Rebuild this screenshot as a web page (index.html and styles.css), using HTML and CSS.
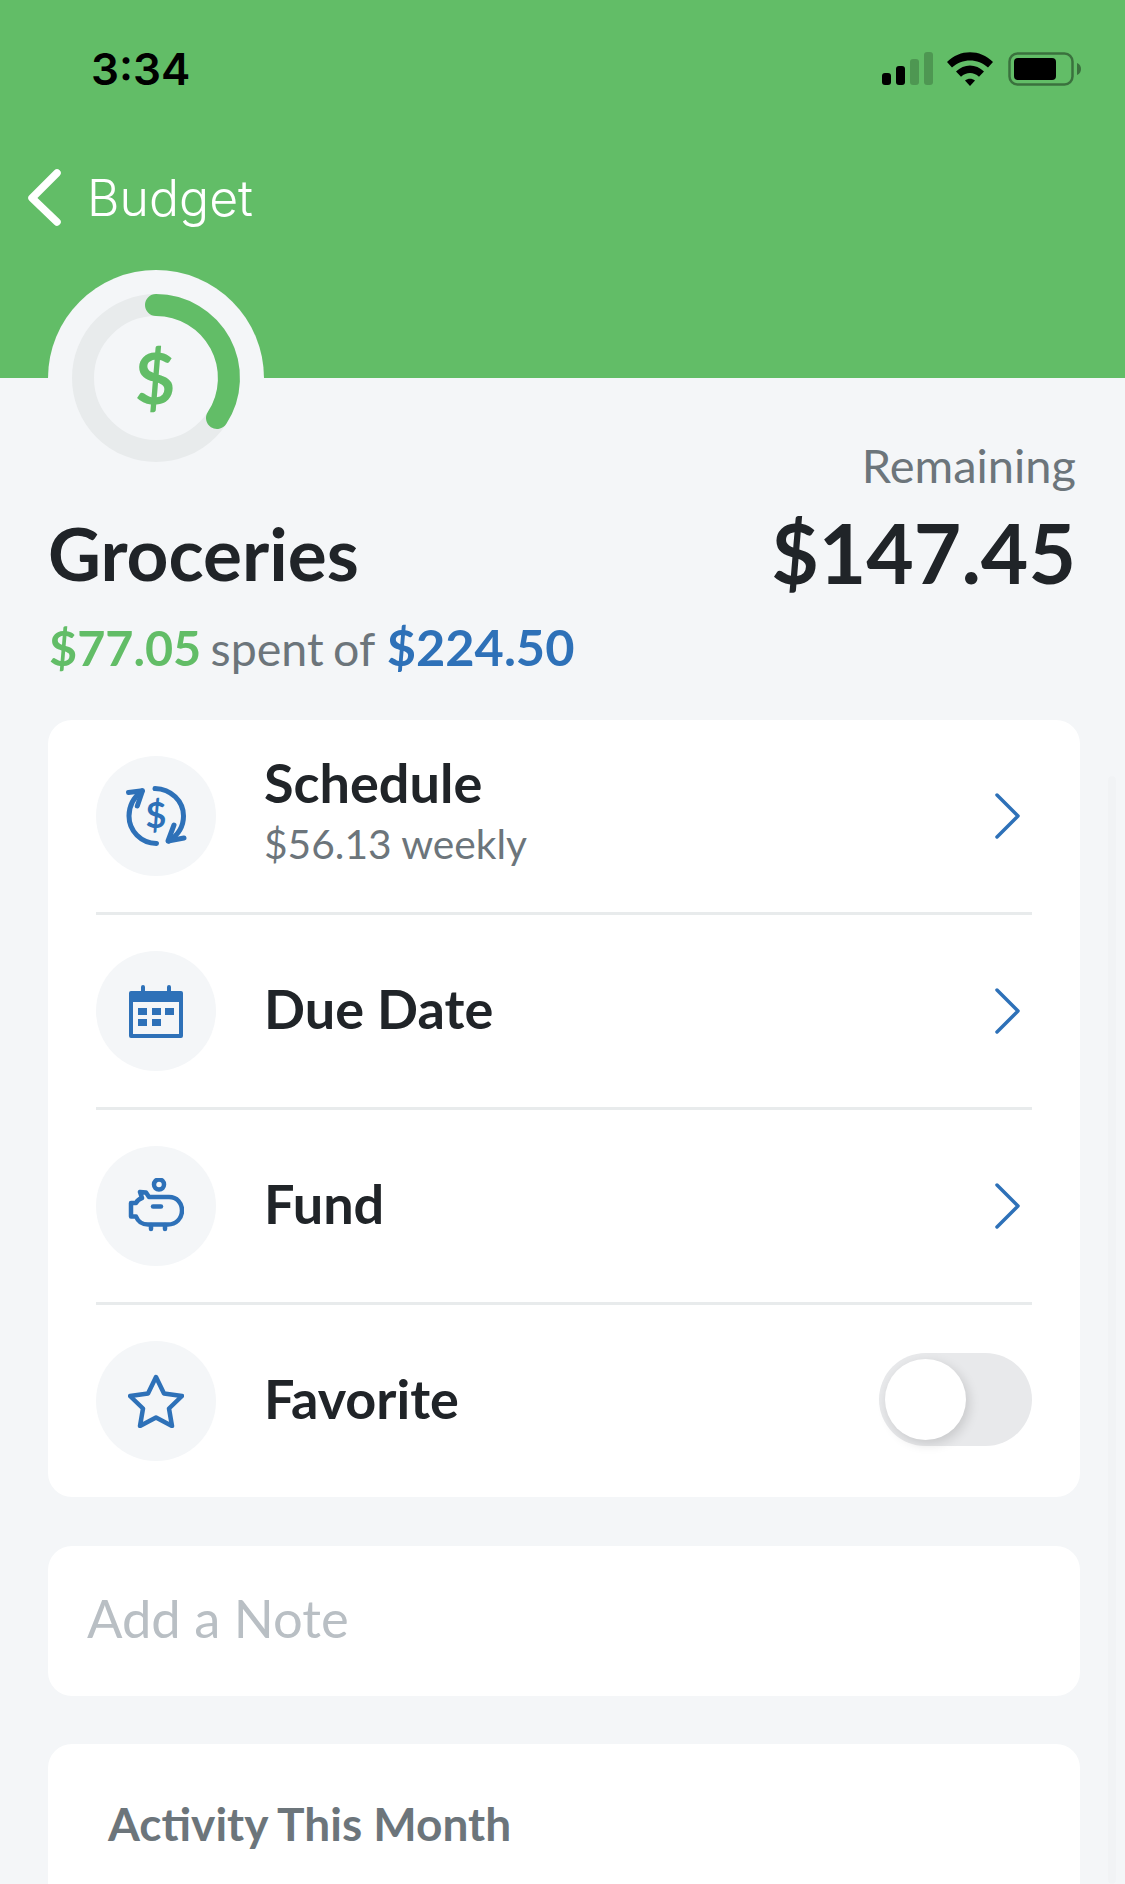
FILE: index.html
```html
<!DOCTYPE html>
<html lang="en">
<head>
<meta charset="utf-8">
<title>Groceries</title>
<link rel="stylesheet" href="styles.css">
</head>
<body>
<div class="screen">
  <header class="header">
    <div class="status">
      <span class="time">3:34</span>
      <div class="status-icons">
        <svg class="signal" width="52" height="34" viewBox="0 0 52 34"><rect x="0" y="21" width="9" height="12" rx="3" fill="#000"/><rect x="14" y="14" width="9" height="19" rx="3" fill="#000"/><rect x="28" y="7" width="9" height="26" rx="3" fill="#000" opacity=".2"/><rect x="42" y="0" width="9" height="33" rx="3" fill="#000" opacity=".2"/></svg>
        <svg class="wifi" width="46" height="34" viewBox="0 0 46 34"><path d="M0 10C13-3 33-3 46 10l-5 5.500C31 6 15 6 5 15.500z" fill="#000"/><path d="M9 19.500c8-8 20-8 28 0l-5 5.300c-5.500-5-12.500-5-18 0z" fill="#000"/><path d="M18 28.500c3-2.500 7-2.500 10 0l-5 5.500z" fill="#000"/></svg>
        <svg class="battery" width="73" height="34" viewBox="0 0 73 34"><rect x="1.500" y="1.500" width="63" height="31" rx="8" fill="none" stroke="#000" stroke-width="2.500" opacity=".4"/><rect x="6" y="6" width="42" height="22" rx="4" fill="#000"/><path d="M69 11c3 1 4 3.500 4 6s-1 5-4 6z" fill="#000" opacity=".4"/></svg>
      </div>
    </div>
    <nav class="nav">
      <svg class="back" width="36" height="60" viewBox="0 0 36 60"><path d="M30 5 5 30l25 24" fill="none" stroke="#fff" stroke-width="7.500" stroke-linecap="round" stroke-linejoin="round"/></svg>
      <span class="nav-title">Budget</span>
    </nav>
    <div class="ring-badge">
      <svg class="ring" width="216" height="216" viewBox="0 0 216 216">
        <circle cx="108" cy="108" r="108" fill="#f4f6f8"/>
        <circle cx="108" cy="108" r="73" fill="none" stroke="#e8ebec" stroke-width="22"/>
        <path d="M108 35A73 73 0 0 1 169 148" fill="none" stroke="#62bd67" stroke-width="22" stroke-linecap="round"/>
      </svg>
      <span class="ring-dollar">$</span>
    </div>
  </header>

  <section class="summary">
    <div class="summary-left">
      <h1 class="category">Groceries</h1>
      <p class="spent"><b class="green">$77.05</b> spent of <b class="blue">$224.50</b></p>
    </div>
    <div class="summary-right">
      <span class="remaining-label">Remaining</span>
      <span class="remaining-value">$147.45</span>
    </div>
  </section>

  <section class="card">
    <div class="row">
      <span class="icon-circle">
        <svg width="62" height="62" viewBox="0 0 62 62"><g fill="none" stroke="#2e71b8" stroke-width="5" stroke-linecap="round" stroke-linejoin="round"><path d="M31.500 58.500C16 58 4 46 4 31 4 21 9 12 17 6"/><path d="M3.500 7.500 17.500 5.700 12.300 21"/><path d="M30 3.500C46 4 58.500 16 58.500 31 58.500 41 53 50 44 56"/><path d="M59 53 43 56 49 40"/></g><text x="31" y="43" class="icon-dollar">$</text></svg>
      </span>
      <span class="row-text row-text-double"><span class="row-title">Schedule</span><span class="row-sub">$56.13 weekly</span></span>
      <svg class="chev" width="28" height="48" viewBox="0 0 28 48"><path d="M3 3l21 21L3 45" fill="none" stroke="#2e71b8" stroke-width="3.500" stroke-linecap="round" stroke-linejoin="round"/></svg>
    </div>
    <div class="row">
      <span class="icon-circle">
        <svg width="56" height="54" viewBox="0 0 56 54"><path d="M3 7h10V3a2 2 0 0 1 4 0v4h22V3a2 2 0 0 1 4 0v4h10a2 2 0 0 1 2 2v43a2 2 0 0 1-2 2H3a2 2 0 0 1-2-2V9a2 2 0 0 1 2-2zm2 11v32h46V18z" fill="#2e71b8"/><path d="M10 24h9v7h-9zM24 24h9v7h-9zM37 24h9v7h-9zM10 35h9v7h-9zM24 35h9v7h-9z" fill="#2e71b8"/></svg>
      </span>
      <span class="row-text"><span class="row-title">Due Date</span></span>
      <svg class="chev" width="28" height="48" viewBox="0 0 28 48"><path d="M3 3l21 21L3 45" fill="none" stroke="#2e71b8" stroke-width="3.500" stroke-linecap="round" stroke-linejoin="round"/></svg>
    </div>
    <div class="row">
      <span class="icon-circle">
        <svg width="56" height="56" viewBox="0 0 56 56"><g fill="none" stroke="#2e71b8" stroke-width="4.500" stroke-linecap="round" stroke-linejoin="round"><circle cx="31" cy="6.500" r="5"/><path d="M12 14l6 .5 3 4.500h20c8 0 13 6 13 13.500 0 8-6 14-14 14H20c-6 0-10-3-12-8H3V25h5c1-2 3-4 6-5z"/><path d="M25 28.500h8"/><path d="M23 47v4M37 47v4"/></g></svg>
      </span>
      <span class="row-text"><span class="row-title">Fund</span></span>
      <svg class="chev" width="28" height="48" viewBox="0 0 28 48"><path d="M3 3l21 21L3 45" fill="none" stroke="#2e71b8" stroke-width="3.500" stroke-linecap="round" stroke-linejoin="round"/></svg>
    </div>
    <div class="row">
      <span class="icon-circle">
        <svg width="56" height="54" viewBox="0 0 56 54"><path d="M28 3l8 16.500 18 2.500-13 12.500 3 17.500-16-8.500-16 8.500 3-17.500L2 22l18-2.500z" fill="none" stroke="#2e71b8" stroke-width="4.500" stroke-linejoin="round"/></svg>
      </span>
      <span class="row-text"><span class="row-title">Favorite</span></span>
      <span class="toggle"><span class="knob"></span></span>
    </div>
  </section>

  <section class="card note">Add a Note</section>

  <section class="card activity">
    <h2 class="activity-title">Activity This Month</h2>
  </section>

  <div class="scrollbar"></div>
</div>
</body>
</html>
```
FILE: styles.css
```css
* { box-sizing: border-box; }
html, body { margin: 0; padding: 0; }
body {
  width: 1125px;
  height: 1884px;
  overflow: hidden;
  background: #f4f6f8;
  font-family: Lato, "Noto Sans", sans-serif;
  color: #202428;
}
.screen { position: relative; height: 1884px; overflow: hidden; }

.header {
  position: relative;
  height: 378px;
  background: #62bd67;
}
.status {
  height: 130px;
  display: flex;
  justify-content: space-between;
  align-items: flex-start;
  padding: 44px 44px 0 91px;
}
.time {
  font-family: Inter, sans-serif;
  font-weight: 600;
  font-size: 44px;
  line-height: 50px;
  color: #000;
}
.status-icons { display: flex; align-items: center; gap: 13px; padding-top: 8px; }
.battery { margin-left: 2px; }
.nav {
  display: flex;
  align-items: center;
  gap: 24px;
  padding: 38px 0 0 27px;
}
.nav-title {
  font-family: Inter, sans-serif;
  font-weight: 300;
  font-size: 50px;
  line-height: 60px;
  color: #fff;
}
.ring-badge {
  position: absolute;
  left: 48px;
  top: 270px;
  width: 216px;
  height: 216px;
}
.ring { display: block; }
.ring-dollar {
  position: absolute;
  inset: 0;
  display: flex;
  align-items: center;
  justify-content: center;
  padding: 0 2px 3px 0;
  font-size: 70px;
  font-weight: 700;
  color: #62bd67;
}

.summary {
  height: 342px;
  display: flex;
  justify-content: space-between;
  align-items: flex-start;
  padding: 0 49px 0 48px;
}
.summary-left { padding-top: 132px; }
.category {
  margin: 0;
  font-size: 73px;
  line-height: 86px;
  font-weight: 700;
}
.spent {
  margin: 22px 0 0;
  padding-left: 1px;
  font-size: 46.500px;
  line-height: 58px;
  word-spacing: -2.500px;
  color: #6c757b;
}
.green { color: #62bd67; font-weight: 700; font-size: 48.500px; }
.blue { color: #2e71b8; font-weight: 700; font-size: 50.500px; margin-left: 3px; }
.summary-right {
  display: flex;
  flex-direction: column;
  align-items: flex-end;
  padding-top: 59px;
}
.remaining-label {
  font-size: 47px;
  line-height: 56px;
  color: #6c757b;
}
.remaining-value {
  font-size: 82px;
  line-height: 100px;
  font-weight: 700;
  margin-top: 9px;
}

.card {
  margin: 0 45px 0 48px;
  background: #fff;
  border-radius: 24px;
}
.row {
  margin: 0 48px;
  display: flex;
  align-items: center;
  padding: 36px 0;
  border-bottom: 3px solid #e8ebec;
}
.row:last-child { border-bottom: 0; }
.icon-circle {
  flex: none;
  width: 120px;
  height: 120px;
  border-radius: 50%;
  background: #f4f6f8;
  display: flex;
  align-items: center;
  justify-content: center;
}
.icon-dollar {
  font-family: Lato, sans-serif;
  font-size: 36px;
  font-weight: 700;
  fill: #2e71b8;
  text-anchor: middle;
}
.row-text {
  flex: 1;
  display: flex;
  flex-direction: column;
  margin-left: 48px;
}
.row-text-double { align-self: flex-start; margin-top: -4px; }
.row-text-double .row-title { padding-bottom: 6px; }
.row-title {
  font-size: 54px;
  line-height: 62px;
  padding-bottom: 5px;
  font-weight: 700;
}
.row-sub {
  font-size: 40.700px;
  line-height: 48px;
  color: #6c757b;
}
.chev { flex: none; margin-right: 10px; }
.toggle {
  flex: none;
  position: relative;
  width: 153px;
  height: 93px;
  margin-bottom: 3px;
  border-radius: 47px;
  background: #e8e9eb;
}
.knob {
  position: absolute;
  left: 6px;
  top: 6px;
  width: 81px;
  height: 81px;
  border-radius: 50%;
  background: #fff;
  box-shadow: 3px 4px 12px rgba(0, 0, 0, .14);
}
.note {
  margin-top: 49px;
  height: 150px;
  padding: 0 0 8px 39px;
  display: flex;
  align-items: center;
  font-size: 52.500px;
  color: #b9bfc4;
}
.activity {
  margin-top: 48px;
  height: 300px;
  padding: 52px 0 0 60px;
}
.activity-title {
  margin: 0;
  font-size: 46px;
  line-height: 56px;
  font-weight: 700;
  color: #6c757b;
}
.scrollbar {
  position: absolute;
  right: 9px;
  top: 776px;
  width: 8px;
  height: 1108px;
  border-radius: 4px;
  background: rgba(0, 0, 0, .012);
}
```
